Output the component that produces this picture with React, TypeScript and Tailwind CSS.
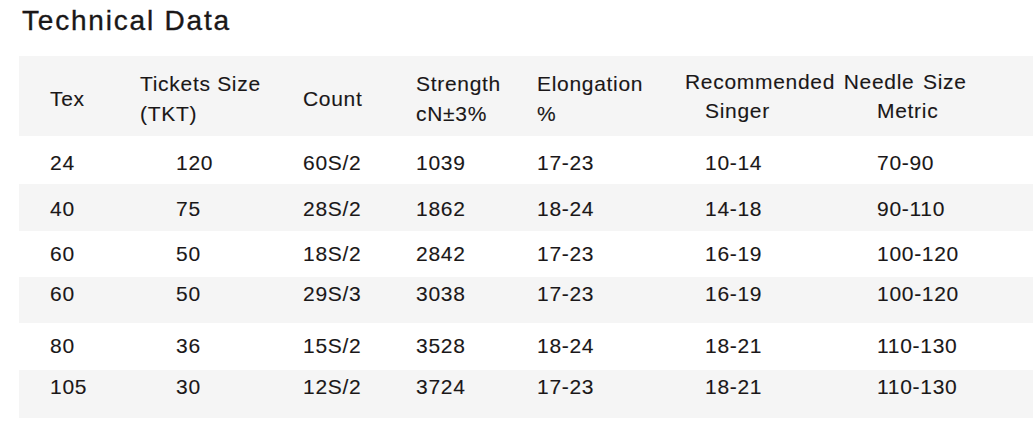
type Row = {
  cells: string[];
  height: string;
  pad: string;
  shaded: boolean;
};

// row heights and text offsets follow the printed sheet, which is not perfectly even
const rows: Row[] = [
  { cells: ["24", "120", "60S/2", "1039", "17-23", "10-14", "70-90"], height: "h-[48px]", pad: "pt-[15px]", shaded: false },
  { cells: ["40", "75", "28S/2", "1862", "18-24", "14-18", "90-110"], height: "h-[47px]", pad: "pt-[13px]", shaded: true },
  { cells: ["60", "50", "18S/2", "2842", "17-23", "16-19", "100-120"], height: "h-[46px]", pad: "pt-[11px]", shaded: false },
  { cells: ["60", "50", "29S/3", "3038", "17-23", "16-19", "100-120"], height: "h-[46px]", pad: "pt-[5px]", shaded: true },
  { cells: ["80", "36", "15S/2", "3528", "18-24", "18-21", "110-130"], height: "h-[47px]", pad: "pt-[11px]", shaded: false },
  { cells: ["105", "30", "12S/2", "3724", "17-23", "18-21", "110-130"], height: "h-[48px]", pad: "pt-[5px]", shaded: true },
];

const cols = "grid grid-cols-[121px_163px_113px_121px_148px_192px_1fr]";

export default function App() {
  return (
    <div className="min-h-[437px] bg-white pl-[19px] font-['Liberation_Sans',Arial,sans-serif] text-[#1a1718]">
      <h2 className="mb-[17px] pl-[3px] pt-[3px] text-[28px] leading-[36px] tracking-[1.8px] [-webkit-text-stroke:0.35px_#1a1718]">
        Technical Data
      </h2>

      <div className="text-[21px] tracking-[0.7px] [-webkit-text-stroke:0.12px_#1a1718]">
        <div className={`${cols} h-[80px] items-center bg-[#f5f5f5] pt-[6px] leading-[30px]`}>
          <div className="pl-[31px]">Tex</div>
          <div>
            <div>Tickets Size</div>
            <div>(TKT)</div>
          </div>
          <div>Count</div>
          <div>
            <div>Strength</div>
            <div>cN±3%</div>
          </div>
          <div>
            <div>Elongation</div>
            <div>%</div>
          </div>
          <div className="col-span-2 mb-[7px] leading-[29px]">
            <div className="[word-spacing:2px]">Recommended Needle Size</div>
            <div className="grid grid-cols-[192px_1fr]">
              <div className="pl-[20px]">Singer</div>
              <div>Metric</div>
            </div>
          </div>
        </div>

        {rows.map((row, i) => (
          <div
            key={i}
            className={`${cols} ${row.height} ${row.pad} leading-6 ${row.shaded ? "bg-[#f5f5f5]" : "bg-white"}`}
          >
            <div className="pl-[31px]">{row.cells[0]}</div>
            <div className="pl-[36px]">{row.cells[1]}</div>
            <div>{row.cells[2]}</div>
            <div>{row.cells[3]}</div>
            <div>{row.cells[4]}</div>
            <div className="pl-[20px]">{row.cells[5]}</div>
            <div>{row.cells[6]}</div>
          </div>
        ))}
      </div>
    </div>
  );
}
